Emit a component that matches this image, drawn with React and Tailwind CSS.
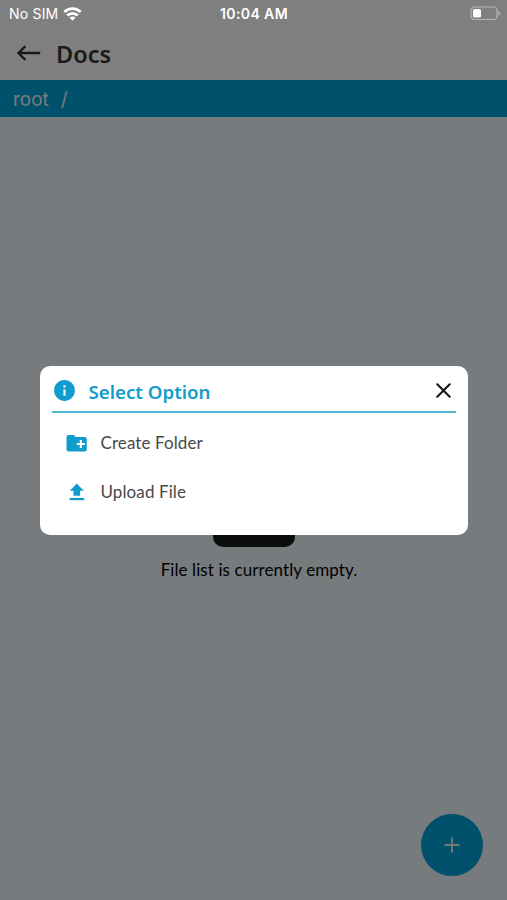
import { MdInfo } from "react-icons/md";

const options = [
  { label: "Create Folder", icon: FolderPlus },
  { label: "Upload File", icon: Upload },
];

export default function App() {
  return (
    <div className="relative flex h-[900px] w-[507px] flex-col overflow-hidden bg-[#eef6fa] font-['Lato',sans-serif]">
      {/* HEADER */}
      <header className="h-20 bg-white pt-7">
        <div className="flex h-[50px] items-center pl-[17px]">
          <svg width="24" height="16" viewBox="0 0 24 16" fill="none" stroke="#333" strokeWidth="2.3" strokeLinecap="round" strokeLinejoin="round">
            <path d="M22.3 8H1.5M7.7 1.8L1.3 8l6.4 6.2" />
          </svg>
          <h1 className="ml-[15px] pt-[3px] font-['Noto_Sans',sans-serif] text-[23.5px] font-semibold leading-none text-[#383838]">
            Docs
          </h1>
        </div>
      </header>

      {/* BREADCRUMB */}
      <nav className="flex h-[37px] items-center gap-3 bg-[#00a2d6] pt-px pl-[13px] font-['Inter',sans-serif] text-[19px] leading-none text-[#f5f5f5]">
        <span>root</span>
        <span>/</span>
      </nav>

      {/* EMPTY LIST */}
      <main className="flex flex-1 flex-col items-center pt-[350px]">
        <div className="h-20 w-[82px] rounded-[10px] bg-[#181a1a]"></div>
        <p className="mt-[13px] mr-[-11px] text-[17px] leading-[20px] tracking-[0.09px] text-black">
          File list is currently empty.
        </p>
      </main>

      <button className="absolute bottom-[24px] right-[24px] flex size-[62px] items-center justify-center rounded-full bg-[#00a2d6]">
        <svg width="16" height="16" viewBox="0 0 16 16" stroke="#f8efe4" strokeWidth="1.8">
          <path d="M8 .6v14.8M.6 8h14.8" />
        </svg>
      </button>

      <div className="absolute inset-0 flex items-start justify-center bg-black/50 pt-[366px]">
        <Modal />
      </div>

      <StatusBar />
    </div>
  );
}

/* Option dialog */
function Modal() {
  return (
    <div className="h-[169px] w-[428px] rounded-[10px] bg-white px-3">
      <div className="flex h-[47px] items-center border-b-2 border-[#4fb9d4] pt-1">
        <MdInfo className="size-[25px] text-[#109dcd]" />
        <h2 className="ml-3 pt-[3px] font-['Noto_Sans',sans-serif] text-[18.7px] font-semibold leading-none text-[#109dcd]">
          Select Option
        </h2>
        <svg className="ml-auto mr-[5px]" width="15" height="15" viewBox="0 0 15 15" stroke="#151515" strokeWidth="2.1" strokeLinecap="round">
          <path d="M1.3 1.3l12.4 12.4M13.7 1.3L1.3 13.7" />
        </svg>
      </div>
      <ul className="pt-[5px] pl-3">
        {options.map(({ label, icon: Icon }) => (
          <li key={label} className="flex h-[49px] items-center">
            <Icon />
            <span className="ml-3 text-[17px] leading-none tracking-[0.1px] text-[#484848]">
              {label}
            </span>
          </li>
        ))}
      </ul>
    </div>
  );
}

function FolderPlus() {
  return (
    <svg width="25" height="25" viewBox="0 0 25 25">
      <path d="M4.6 5h5l2.2 2.1h8.9a2.1 2.1 0 0 1 2.1 2.1v10.2a2.1 2.1 0 0 1-2.1 2.1H4.6a2.1 2.1 0 0 1-2.1-2.1V7.1A2.1 2.1 0 0 1 4.6 5z" fill="#109dcd" />
      <path d="M16.8 10v8M12.8 14h8" stroke="#fff" strokeWidth="2.1" />
    </svg>
  );
}

function Upload() {
  return (
    <svg width="25" height="25" viewBox="0 0 25 25" fill="#109dcd">
      <path d="M12.8 4.6l7 7.2h-3.7v5H9.5v-5H5.8z" />
      <path d="M5.6 19h14.6v2.2H5.6z" />
    </svg>
  );
}

function StatusBar() {
  return (
    <div className="absolute inset-x-0 top-0 flex h-[27px] items-center font-['Inter',sans-serif] text-[14px] leading-none text-white">
      <span className="ml-[9px] tracking-[0.2px]">No SIM</span>
      <svg className="ml-[5px]" width="19" height="14" viewBox="0 0 19 14" fill="none" stroke="#fff" strokeWidth="2.8">
        <path d="M1.3 5.1a11.6 11.6 0 0 1 16.4 0M4.2 8.5a7.5 7.5 0 0 1 10.6 0" />
        <path d="M9.5 13.8l-3-3a4.2 4.2 0 0 1 6 0z" fill="#fff" stroke="none" />
      </svg>
      <span className="absolute left-[220px] font-semibold tracking-[0.4px]">10:04 AM</span>
      <svg className="ml-auto mr-[6px]" width="31" height="15" viewBox="0 0 31 15">
        <rect x="1" y="1" width="26" height="12.5" rx="3.5" fill="none" stroke="#b5b5b5" strokeWidth="1.2" />
        <rect x="3" y="3" width="8" height="8.5" rx="1.5" fill="#fff" />
        <path d="M28.3 4.8c2.4.8 2.4 4 0 4.8z" fill="#b5b5b5" />
      </svg>
    </div>
  );
}
